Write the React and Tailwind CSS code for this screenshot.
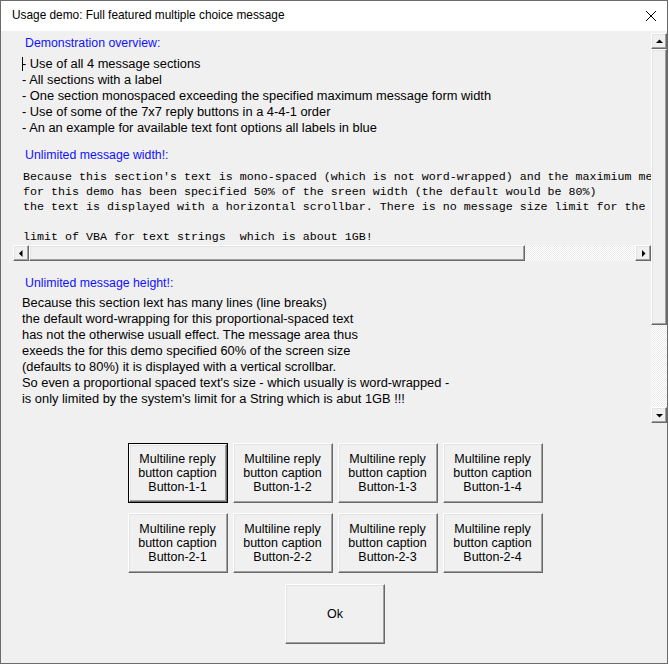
import React from "react";

const raised =
  "border border-t-white border-l-white border-r-[#696969] border-b-[#696969] shadow-[inset_-1px_-1px_0_#a0a0a0,inset_1px_1px_0_#e3e3e3] bg-[#f0f0f0]";
const track =
  "bg-[image:repeating-conic-gradient(#ffffff_0%_25%,#ebebeb_0%_50%)] bg-[length:2px_2px]";

function Arrow({ dir }) {
  const pts = {
    up: "4,9 11,9 7.5,5.5",
    down: "4,6 11,6 7.5,9.5",
    left: "8.5,4 8.5,11 5,7.5",
    right: "6,4 6,11 9.5,7.5",
  }[dir];
  return (
    <svg width="14" height="14" viewBox="0 0 14 14" className="block">
      <polygon points={pts} fill="#000" />
    </svg>
  );
}

function SBtn({ dir }) {
  return (
    <div className={`w-[16px] h-[16px] shrink-0 flex items-center justify-center ${raised}`}>
      <Arrow dir={dir} />
    </div>
  );
}

function ReplyButton({ label, isDefault }) {
  const inner = (
    <div
      className={`w-full h-full flex flex-col items-center justify-center text-[12.5px] leading-[14px] text-black ${raised}`}
    >
      <span>Multiline reply</span>
      <span>button caption</span>
      <span>{label}</span>
    </div>
  );
  return isDefault ? (
    <div className="w-[100px] h-[60px] border border-black">{inner}</div>
  ) : (
    <div className="w-[100px] h-[60px]">{inner}</div>
  );
}

export default function App() {
  const font = { fontFamily: '"Liberation Sans", Arial, sans-serif' };
  return (
    <div className="w-[669px] h-[665px] bg-white" style={font}>
      <div className="w-[668px] h-[664px] border border-[#6b6b6b] bg-[#f0f0f0] flex flex-col">
        {/* title bar */}
        <div className="h-[30px] bg-white flex items-center pl-[11px] pr-[9px] shrink-0">
          <span className="text-[11.85px] text-black flex-1">
            Usage demo: Full featured multiple choice message
          </span>
          <svg width="12" height="12" viewBox="0 0 12 12" className="mr-[1px]">
            <path d="M1 1 L11 11 M11 1 L1 11" stroke="#000" strokeWidth="1" />
          </svg>
        </div>

        {/* message area */}
        <div className="h-[393px] flex shrink-0">
          <div className="flex-1 min-w-0 overflow-hidden relative flex flex-col pt-[4px]">
            <div className="pl-[24px] text-[12.3px] leading-[16px] text-[#1010ff] whitespace-pre">
              Demonstration overview:
            </div>
            <div className="pl-[21px] mt-[5px] text-[12.85px] leading-[16px] text-black whitespace-pre relative">
              <div>- Use of all 4 message sections</div>
              <div>- All sections with a label</div>
              <div>- One section monospaced exceeding the specified maximum message form width</div>
              <div>- Use of some of the 7x7 reply buttons in a 4-4-1 order</div>
              <div>- An an example for available text font options all labels in blue</div>
              <div className="absolute left-[21px] top-[1px] w-[1px] h-[14px] bg-black" />
            </div>

            <div className="pl-[24px] mt-[11px] text-[12.3px] leading-[16px] text-[#1010ff] whitespace-pre">
              Unlimited message width!:
            </div>
            <div className="ml-[12px] mt-[7px] flex flex-col">
              <div
                className="pl-[10px] text-[11.67px] leading-[15px] text-black whitespace-pre"
                style={{ fontFamily: '"Liberation Mono", "Courier New", monospace' }}
              >
                <div>Because this section's text is mono-spaced (which is not word-wrapped) and the maximium message width</div>
                <div>for this demo has been specified 50% of the sreen width (the default would be 80%)</div>
                <div>the text is displayed with a horizontal scrollbar. There is no message size limit for the display</div>
                <div>&nbsp;</div>
                <div>limit of VBA for text strings  which is about 1GB!</div>
              </div>
              <div className="h-[16px] flex w-[638px]">
                <SBtn dir="left" />
                <div className={`w-[496px] h-[16px] ${raised}`} />
                <div className={`flex-1 h-[16px] ${track}`} />
                <SBtn dir="right" />
              </div>
            </div>

            <div className="pl-[24px] mt-[14px] text-[12.3px] leading-[16px] text-[#1010ff] whitespace-pre">
              Unlimited message height!:
            </div>
            <div className="pl-[21px] mt-[4px] text-[12.85px] leading-[16px] text-black whitespace-pre">
              <div>Because this section lext has many lines (line breaks)</div>
              <div>the default word-wrapping for this proportional-spaced text</div>
              <div>has not the otherwise usuall effect. The message area thus</div>
              <div>exeeds the for this demo specified 60% of the screen size</div>
              <div>(defaults to 80%) it is displayed with a vertical scrollbar.</div>
              <div>So even a proportional spaced text's size - which usually is word-wrapped -</div>
              <div>is only limited by the system's limit for a String which is abut 1GB !!!</div>
            </div>
          </div>

          {/* vertical scrollbar */}
          <div className="w-[16px] mt-[2px] h-[390px] flex flex-col shrink-0">
            <SBtn dir="up" />
            <div className={`h-[276px] w-[16px] ${raised}`} />
            <div className={`flex-1 w-[16px] ${track}`} />
            <SBtn dir="down" />
          </div>
        </div>

        {/* buttons */}
        <div className="flex flex-col items-center pt-[19px] pl-[2px]">
          <div className="flex gap-[5px]">
            <ReplyButton label="Button-1-1" isDefault />
            <ReplyButton label="Button-1-2" />
            <ReplyButton label="Button-1-3" />
            <ReplyButton label="Button-1-4" />
          </div>
          <div className="flex gap-[5px] mt-[10px]">
            <ReplyButton label="Button-2-1" />
            <ReplyButton label="Button-2-2" />
            <ReplyButton label="Button-2-3" />
            <ReplyButton label="Button-2-4" />
          </div>
          <div className={`mt-[11px] w-[100px] h-[60px] flex items-center justify-center text-[12.5px] text-black ${raised}`}>
            Ok
          </div>
        </div>
      </div>
    </div>
  );
}
